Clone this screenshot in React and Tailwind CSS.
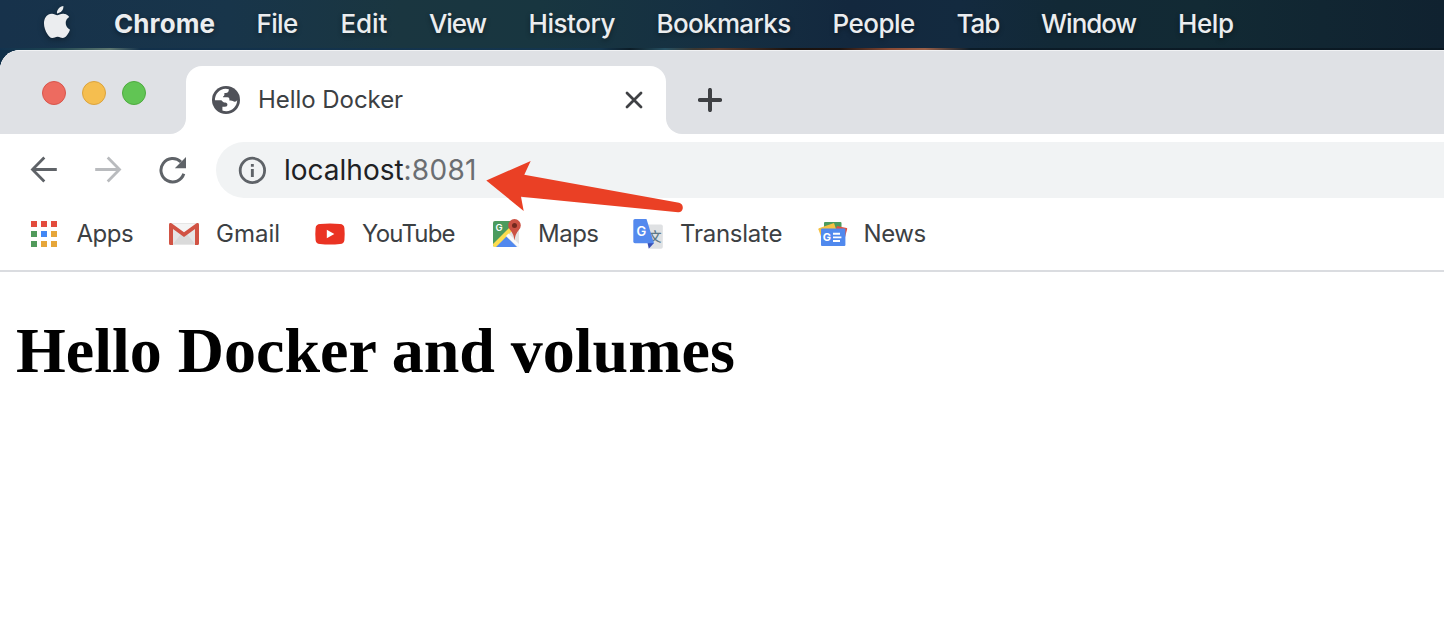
import { SiApple } from "react-icons/si";

const menuItems = [
  { label: "Chrome", cls: "w-[142.5px] font-bold tracking-[0.1px]" },
  { label: "File", cls: "w-[84px] tracking-[-0.65px]" },
  { label: "Edit", cls: "w-[88.5px] tracking-[-0.1px]" },
  { label: "View", cls: "w-[99.5px] tracking-[-1.1px]" },
  { label: "History", cls: "w-[128px] tracking-[-0.45px]" },
  { label: "Bookmarks", cls: "w-[176px] tracking-[-0.65px]" },
  { label: "People", cls: "w-[124px] tracking-[-0.5px]" },
  { label: "Tab", cls: "w-[84.5px] tracking-[-1px]" },
  { label: "Window", cls: "w-[137px] tracking-[-1px]" },
  { label: "Help", cls: "tracking-[-0.4px]" },
];

function MenuBar() {
  return (
    <nav className="flex h-12 items-center bg-[linear-gradient(90deg,#17324b_0px,#18354a_230px,#1a3640_400px,#183640_540px,#152f42_720px,#13283e_850px,#132a3f_960px,#122936_1060px,#122a34_1200px,#102230_1444px)] pb-px text-[26px] leading-none font-medium whitespace-nowrap text-[#ebedef]">
      <div className="flex w-[114px] pb-1 pl-[41px] drop-shadow-[0_2px_3px_rgba(0,0,0,0.35)]">
        <SiApple className="size-8" />
      </div>
      {menuItems.map(({ label, cls }) => (
        <span key={label} className={`${cls} [text-shadow:0_2px_5px_rgba(0,0,0,0.4)]`}>
          {label}
        </span>
      ))}
    </nav>
  );
}

function GlobeIcon() {
  return (
    <svg className="size-7" viewBox="0 0 28 28">
      <circle cx="14" cy="14" r="14" fill="#505259" />
      <path
        d="M2.9 14.2C2.9 8 7.6 2.9 13.6 2.8C14.8 2.8 15.8 3 16.8 3.2V4C16.8 5.8 15.4 7 14 7H12.4V8.4C12.4 9.4 11.8 10 11 10.4V11.2H15.4C16.8 11.2 17.4 12 17.4 13.2V14.6H18.8C20.4 14.6 21.4 15.8 22.8 15.8C24.2 15.8 24.9 14.8 25.2 13.8C25.3 20 20.4 25.2 14.4 25.2C12.8 25.2 11.4 25 10.4 24.6V20.8H13C14.6 20.8 15.4 20 15.4 18.6C15.4 17.4 14.6 16.8 13.2 16.6C10.4 16.5 10.6 14.2 8.4 14.2Z"
        fill="#fff"
      />
    </svg>
  );
}

function TabStrip() {
  return (
    <header className="bg-white">
      <div className="h-4 rounded-tl-[20px] border-t border-[#f1f2f4] bg-[#dfe1e5]" />
      <div className="flex h-[68px]">
        <div className="flex w-[186px] gap-4 rounded-br-2xl bg-[#dfe1e5] pt-[15px] pl-[42px]">
          <i className="size-6 rounded-full border border-[#d8554b] bg-[#ed6b60]" />
          <i className="size-6 rounded-full border border-[#dba33d] bg-[#f5be4f]" />
          <i className="size-6 rounded-full border border-[#4eab3f] bg-[#61c554]" />
        </div>
        <div className="w-[480px] bg-[#dfe1e5]">
          <div className="flex h-full items-center rounded-t-2xl bg-white pr-[23px] pl-[26px]">
            <GlobeIcon />
            <span className="ml-[18px] flex-1 text-2xl leading-none tracking-[-0.05px] text-[#3c4043]">Hello Docker</span>
            <svg className="size-[18px]" viewBox="0 0 18 18">
              <path d="M2 2L16 16M16 2L2 16" stroke="#3f4144" strokeWidth="2.8" strokeLinecap="round" />
            </svg>
          </div>
        </div>
        <div className="flex flex-1 items-center rounded-bl-2xl bg-[#dfe1e5] pl-8">
          <svg className="size-6" viewBox="0 0 24 24">
            <path d="M12 1.9V22.1M1.9 12H22.1" stroke="#3f4144" strokeWidth="4" strokeLinecap="round" />
          </svg>
        </div>
      </div>
    </header>
  );
}

function Toolbar() {
  return (
    <div className="flex h-16 items-end pl-[30px]">
      <div className="flex h-14 w-[186px] items-center">
        <svg className="mr-9 size-7" viewBox="0 0 28 28" fill="none" stroke="#5f6368" strokeWidth="2.8">
          <path d="M26.8 13.5H2.5M14.3 1.6L2.5 13.5L14.3 25.4" />
        </svg>
        <svg className="mr-[37px] size-7" viewBox="0 0 28 28" fill="none" stroke="#b9bbbe" strokeWidth="2.8">
          <path d="M1.2 13.5H25.5M13.7 1.6L25.5 13.5L13.7 25.4" />
        </svg>
        <svg className="size-7" viewBox="0 0 28 28" fill="none">
          <path d="M24.8 17.8A11.7 11.7 0 1 1 22 6" stroke="#5f6368" strokeWidth="3" />
          <path d="M27 1V12.2H15.8Z" fill="#5f6368" />
        </svg>
      </div>
      <div className="flex h-14 flex-1 items-center rounded-l-full bg-[#f1f3f4] pl-[22px] text-[28px] leading-none">
        <svg className="size-7" viewBox="0 0 28 28">
          <circle cx="14.4" cy="14.4" r="12.2" fill="none" stroke="#5f6368" strokeWidth="2.8" />
          <path d="M12.9 13H15.8V21H12.9ZM12.9 8H15.8V10.8H12.9Z" fill="#5f6368" />
        </svg>
        <span className="ml-[18px] w-[119.5px] text-[#202124]">localhost</span>
        <span className="tracking-[0.3px] text-[#6b6e72]">:8081</span>
      </div>
    </div>
  );
}

function AppsIcon() {
  return (
    <svg className="size-[30px]" viewBox="0 0 30 30">
      <path d="M2 2h6v6h-6zM12 2h6v6h-6zM22 2h6v6h-6z" fill="#e34c3d" />
      <path d="M2 12h6v6h-6zM2 22h6v6h-6z" fill="#519a5b" />
      <path d="M12 12h6v6h-6z" fill="#4387f4" />
      <path d="M22 12h6v6h-6zM12 22h6v6h-6zM22 22h6v6h-6z" fill="#e6a63a" />
    </svg>
  );
}

function GmailIcon() {
  return (
    <svg className="size-[30px]" viewBox="0 0 30 30">
      <rect x="1" y="4" width="28" height="22" rx="2" fill="#e6e6e6" />
      <path d="M3 5L15 17L27 5Z" fill="#f4f4f4" />
      <path d="M4 25L12 15L15 17L18 15L26 25Z" fill="#dadada" />
      <path d="M0 6C0 3.8 1.2 3.6 2.5 4.3L15 13.3L27.5 4.3C28.8 3.6 30 3.8 30 6V24.5Q30 26 28.5 26H26V10L15 18L4 10V26H1.5Q0 26 0 24.5Z" fill="#d15344" />
    </svg>
  );
}

function YouTubeIcon() {
  return (
    <svg className="size-[30px]" viewBox="0 0 30 30">
      <path d="M5 5Q15 4 25 5Q29 5.3 29.4 9Q30 15 29.4 21.2Q29 24.6 25 25Q15 26 5 25Q1 24.6.6 21.2Q0 15 .6 9Q1 5.3 5 5Z" fill="#ea3323" />
      <path d="M11.8 10.8V19.2L19.3 15Z" fill="#fff" />
    </svg>
  );
}

function MapsIcon() {
  return (
    <svg className="size-[30px]" viewBox="0 0 30 30">
      <defs>
        <clipPath id="map-sheet">
          <rect x="1" y="2" width="26" height="26" rx="2" />
        </clipPath>
      </defs>
      <g clipPath="url(#map-sheet)">
        <path d="M1 2H27V28H1Z" fill="#e3e3e3" />
        <path d="M1 2H27L1 28Z" fill="#4b9b5e" />
        <path d="M3 28L14 17L25 28Z" fill="#5188ee" />
        <path d="M-1 27L18 8L21 11L2 30Z" fill="#fbdc50" />
        <path d="M14 17L16.5 14.5L29 27L27 29Z" fill="#fafafa" />
      </g>
      <text x="3.4" y="12.4" fontSize="9.5" fontWeight="600" fill="#fff">G</text>
      <path d="M22.5 21.5Q21.8 15 18.2 11A6.3 6.3 0 1 1 26.8 11Q23.2 15 22.5 21.5Z" fill="#cc5244" />
      <circle cx="22.5" cy="6.6" r="2.5" fill="#74291f" />
    </svg>
  );
}

function TranslateIcon() {
  return (
    <svg className="size-[30px]" viewBox="0 0 30 30">
      <path d="M12 5.5H28Q29.8 5.5 29.8 7.3V28Q29.8 29.8 28 29.8H17Z" fill="#dfe1e3" />
      <text x="15.6" y="22.4" fontSize="13" fontWeight="500" className="font-['Noto_Sans_CJK_SC',sans-serif]" fill="#607988">文</text>
      <path d="M14.5 24H21L15.8 29.8Z" fill="#3a51b5" />
      <path d="M2 0H13.5L21 24.3H2Q.3 24.3.3 22.5V1.8Q.3 0 2 0Z" fill="#5489ee" />
      <text x="3.6" y="17" fontSize="13" fontWeight="600" fill="#fff">G</text>
    </svg>
  );
}

function NewsIcon() {
  return (
    <svg className="size-[30px]" viewBox="0 0 30 30">
      <rect x="6" y="3" width="17.5" height="12" rx="1" fill="#4b9b5e" />
      <path d="M19 7L28.6 9Q29.4 9.2 29.2 10L25.5 24L14 20Z" fill="#e25241" />
      <path d="M.9 9.3L16 4L20 16L5 23L.4 10.3Q.2 9.6.9 9.3Z" fill="#f6c244" />
      <rect x="3" y="9.4" width="24.4" height="17.6" rx="1" fill="#5089ee" />
      <text x="4.8" y="22.1" fontSize="11" fontWeight="700" fill="#fff">G</text>
      <path d="M15 13.8H22V15.7H15ZM15 17.4H23.4V19.3H15ZM15 21H22V22.9H15Z" fill="#fff" />
    </svg>
  );
}

const bookmarks = [
  { label: "Apps", Icon: AppsIcon, cls: "w-[140px] gap-[17.5px] tracking-[-0.5px]" },
  { label: "Gmail", Icon: GmailIcon, cls: "w-[146px] gap-[17px]" },
  { label: "YouTube", Icon: YouTubeIcon, cls: "w-[177px] gap-[17px] tracking-[-0.8px]" },
  { label: "Maps", Icon: MapsIcon, cls: "w-[141px] gap-4 tracking-[-0.5px]" },
  { label: "Translate", Icon: TranslateIcon, cls: "w-[184.5px] gap-[17px] tracking-[-0.25px]" },
  { label: "News", Icon: NewsIcon, cls: "gap-4 tracking-[-0.45px]" },
];

function BookmarksBar() {
  return (
    <div className="flex h-[74px] items-center border-b-2 border-[#dadce0] pl-[29px] text-2xl leading-none text-[#3c4043]">
      {bookmarks.map(({ label, Icon, cls }) => (
        <div key={label} className={`flex items-center ${cls}`}>
          <Icon />
          <span>{label}</span>
        </div>
      ))}
    </div>
  );
}

export default function App() {
  return (
    <div className="relative h-[638px] w-[1444px] overflow-hidden bg-white font-['Inter',sans-serif]">
      <MenuBar />
      <div className="bg-[#0f2f49]">
        <div className="h-0.5 bg-[linear-gradient(90deg,#12324e_0px,#1d4450_55px,#5d7770_110px,#12304a_140px,#14364e_600px,#0c1c26_630px,#265062_665px,#3a3630_695px,#5a3a2c_720px,#18120f_790px,#1c1310_840px,#8a4a34_890px,#9a6048_925px,#0c1c28_970px,#0a1822_1444px)]" />
        <div className="overflow-hidden rounded-tl-[20px] bg-white">
          <TabStrip />
          <Toolbar />
          <BookmarksBar />
        </div>
      </div>
      <main className="px-4 pt-[42px]">
        <h1 className="font-['Liberation_Serif',serif] text-[64px] leading-[74px] font-bold text-black">
          Hello Docker and volumes
        </h1>
      </main>
      <svg className="absolute top-[155px] left-[480px] h-[62px] w-[210px]" viewBox="480 155 210 62">
        <path
          d="M486.3 180.5L530.7 161L524.3 174.7L679 202.8Q683 204 682.8 208.2Q682 212.6 678 212.3L521 196.7L523.7 211Z"
          fill="#ea4025"
        />
      </svg>
    </div>
  );
}
